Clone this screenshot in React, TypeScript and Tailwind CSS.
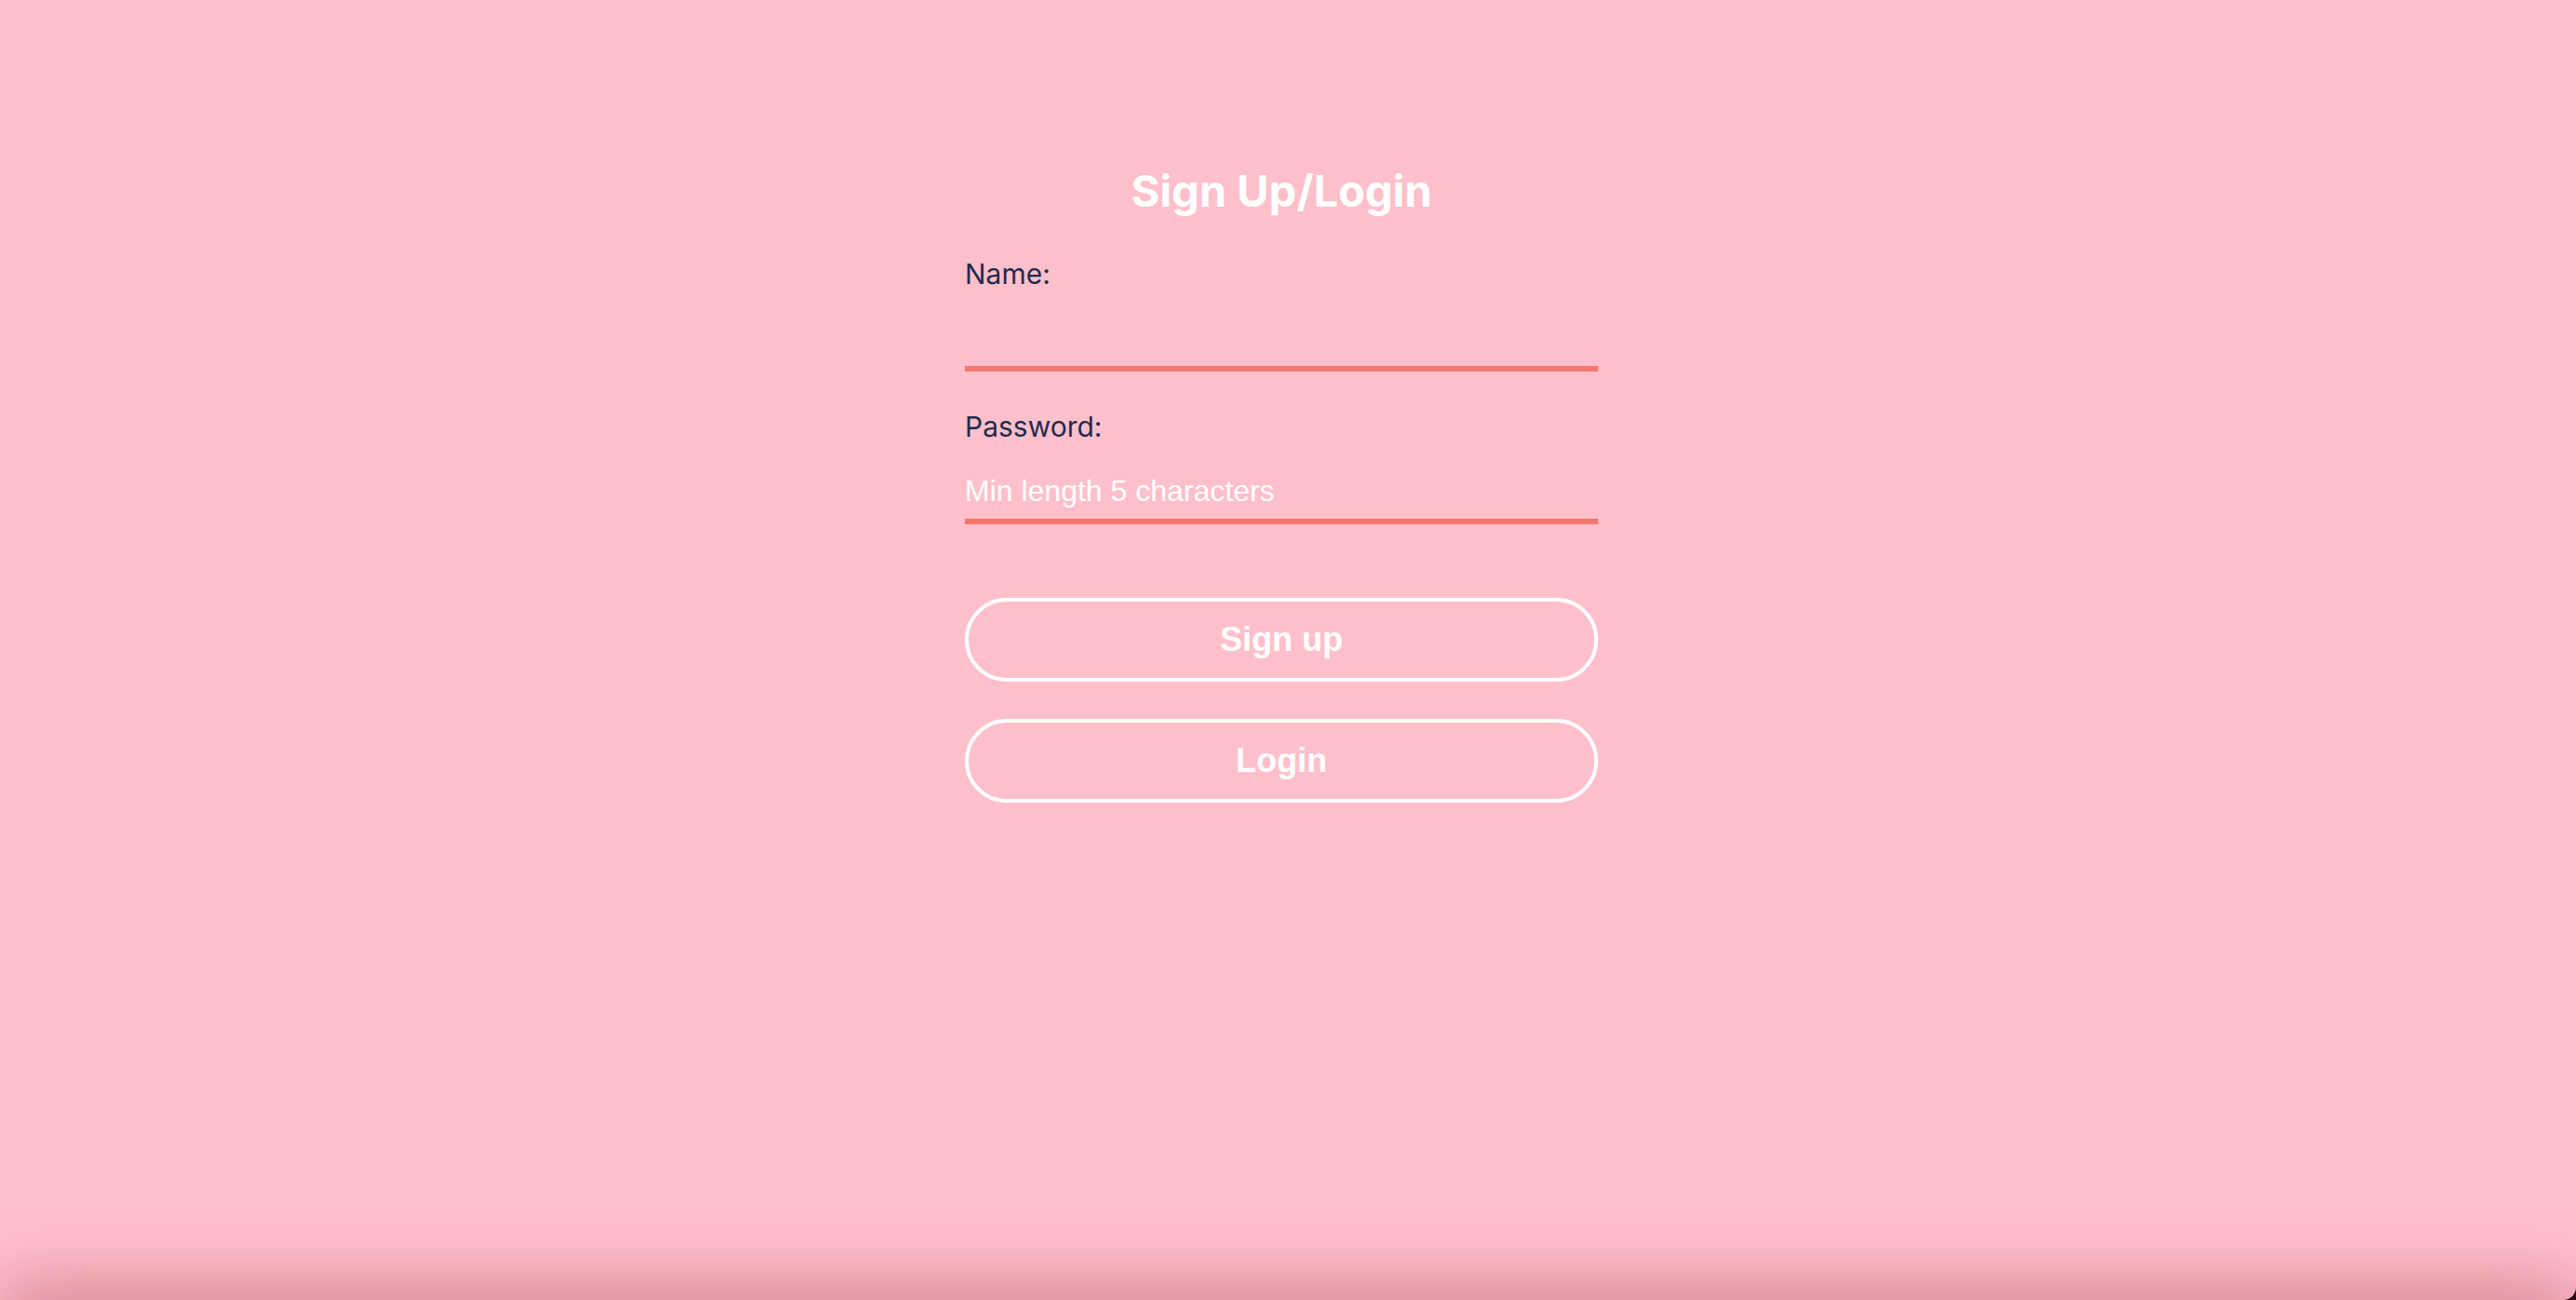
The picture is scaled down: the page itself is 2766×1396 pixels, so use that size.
import { useState } from 'react';

export default function App() {
  const [name, setName] = useState('');
  const [password, setPassword] = useState('');

  return (
    <div className="bg-[#2b0b12]">
      <div className="relative h-[1396px] overflow-hidden rounded-br-[14px] bg-[#ffc0cb] pr-[14px]">
        <form
          onSubmit={(e) => e.preventDefault()}
          className="mx-auto flex w-[680px] flex-col pt-[176px]"
        >
          <h1 className="text-center font-['Inter',sans-serif] text-[47px] leading-[58px] font-bold text-white">
            Sign Up/Login
          </h1>

          <label
            htmlFor="name"
            className="mt-[42px] font-['Inter',sans-serif] text-[30px] leading-[36px] text-[#1f2a4f]"
          >
            Name:
          </label>
          <input
            id="name"
            type="text"
            value={name}
            onChange={(e) => setName(e.target.value)}
            className="mt-[21px] h-[66px] w-full border-b-[6px] border-[#f77672] bg-transparent font-['Liberation_Sans',Arial,sans-serif] text-[32px] text-white outline-none placeholder:text-white"
          />

          <label
            htmlFor="password"
            className="mt-[41px] font-['Inter',sans-serif] text-[30px] leading-[36px] text-[#1f2a4f]"
          >
            Password:
          </label>
          <input
            id="password"
            type="password"
            placeholder="Min length 5 characters"
            value={password}
            onChange={(e) => setPassword(e.target.value)}
            className="mt-[21px] h-[66px] w-full border-b-[6px] border-[#f77672] bg-transparent font-['Liberation_Sans',Arial,sans-serif] text-[32px] text-white outline-none placeholder:text-white"
          />

          <button
            type="submit"
            className="mt-[79px] h-[90px] w-full rounded-full border-4 border-white bg-transparent font-['Liberation_Sans',Arial,sans-serif] text-[36px] font-bold text-white"
          >
            Sign up
          </button>
          <button
            type="button"
            className="mt-[40px] h-[90px] w-full rounded-full border-4 border-white bg-transparent font-['Liberation_Sans',Arial,sans-serif] text-[36px] font-bold text-white"
          >
            Login
          </button>
        </form>

        {/* shadow cast up from below the window edge */}
        <div className="pointer-events-none absolute top-full right-[10px] left-[10px] h-[40px] rounded-[40px] shadow-[0_0_70px_20px_rgba(170,70,90,0.45)]" />
      </div>
    </div>
  );
}
